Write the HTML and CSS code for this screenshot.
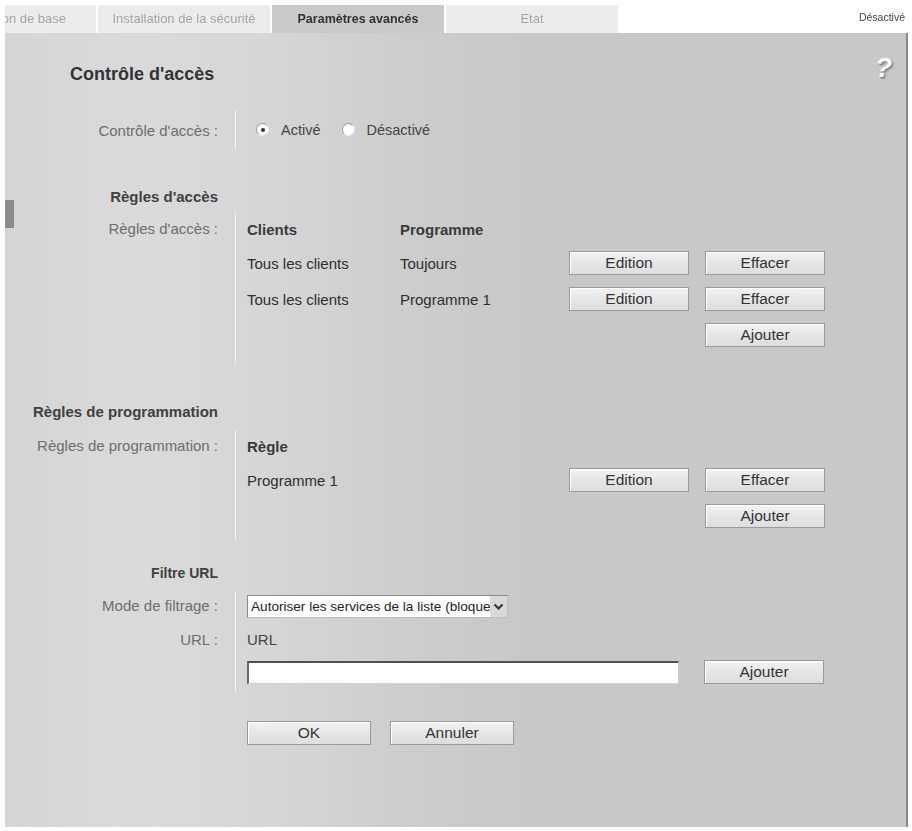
FILE: index.html
```html
<!DOCTYPE html>
<html lang="fr">
<head>
<meta charset="UTF-8">
<meta name="viewport" content="width=device-width, initial-scale=1.0">
<title>Paramètres avancés - Contrôle d'accès</title>
<link rel="stylesheet" href="styles.css">
</head>
<body>
<div class="page">
    <div class="topbar">
        <div class="tabs-clip">
            <div class="tabs">
                <div class="tab">Installation de base</div>
                <div class="tab">Installation de la sécurité</div>
                <div class="tab tab-active">Paramètres avancés</div>
                <div class="tab">Etat</div>
            </div>
        </div>
        <div class="status">Désactivé</div>
    </div>

    <div class="panel">
        <div class="marker"></div>

        <div class="title-row">
            <h1>Contrôle d'accès</h1>
            <span class="help">?</span>
        </div>

        <!-- Contrôle d'accès -->
        <div class="field field-single">
            <div class="label">Contrôle d'accès :</div>
            <div class="value radios">
                <span class="radio checked"></span><span class="radio-text">Activé</span>
                <span class="radio"></span><span class="radio-text">Désactivé</span>
            </div>
        </div>

        <!-- Règles d'accès -->
        <div class="section-title">Règles d'accès</div>
        <div class="field field-rules">
            <div class="label">Règles d'accès :</div>
            <div class="value">
                <div class="rules">
                    <div class="rule-head">Clients</div>
                    <div class="rule-head">Programme</div>
                    <div></div>
                    <div></div>

                    <div class="cell">Tous les clients</div>
                    <div class="cell">Toujours</div>
                    <div class="cell"><button class="button">Edition</button></div>
                    <div class="cell"><button class="button">Effacer</button></div>

                    <div class="cell">Tous les clients</div>
                    <div class="cell">Programme 1</div>
                    <div class="cell"><button class="button">Edition</button></div>
                    <div class="cell"><button class="button">Effacer</button></div>

                    <div class="cell"></div>
                    <div class="cell"></div>
                    <div class="cell"></div>
                    <div class="cell"><button class="button">Ajouter</button></div>
                </div>
            </div>
        </div>

        <!-- Règles de programmation -->
        <div class="section-title section-wide">Règles de programmation</div>
        <div class="field field-schedule">
            <div class="label">Règles de programmation :</div>
            <div class="value">
                <div class="rules">
                    <div class="rule-head wide">Règle</div>
                    <div></div>
                    <div></div>

                    <div class="cell wide">Programme 1</div>
                    <div class="cell"><button class="button">Edition</button></div>
                    <div class="cell"><button class="button">Effacer</button></div>

                    <div class="cell wide"></div>
                    <div class="cell"></div>
                    <div class="cell"><button class="button">Ajouter</button></div>
                </div>
            </div>
        </div>

        <!-- Filtre URL -->
        <div class="section-title section-url">Filtre URL</div>
        <div class="field field-mode">
            <div class="label">Mode de filtrage :</div>
            <div class="value">
                <div class="select">
                    <span class="select-text">Autoriser les services de la liste (bloquer tous les autres)</span>
                    <span class="select-arrow">
                        <svg width="11" height="8" viewBox="0 0 11 8"><path d="M1.5 1.5 L5.5 5.5 L9.5 1.5" fill="none" stroke="#333" stroke-width="2.2"/></svg>
                    </span>
                </div>
            </div>
        </div>
        <div class="field field-url">
            <div class="label">URL :</div>
            <div class="value">
                <div class="url-head">URL</div>
                <div class="url-row">
                    <input type="text" class="url-input">
                    <button class="button">Ajouter</button>
                </div>
            </div>
        </div>

        <div class="actions">
            <button class="button button-wide">OK</button>
            <button class="button button-wide">Annuler</button>
        </div>
    </div>
</div>
</body>
</html>
```

FILE: styles.css
```css
body {
    font-family: "Liberation Sans", Arial, sans-serif;
    background-color: #ffffff;
    margin: 0;
    padding: 0;
    color: #333333;
}

.page {
    width: 912px;
    height: 831px;
    display: flex;
    flex-direction: column;
    filter: blur(0.35px);
}

.topbar {
    display: flex;
    align-items: flex-end;
    padding: 5px 7px 0 5px;
    height: 28px;
}

.tabs-clip {
    flex-grow: 1;
    overflow: hidden;
    height: 28px;
}

.tabs {
    display: flex;
    gap: 2px;
    margin-left: -81px;
}

.tab {
    flex: none;
    width: 172px;
    height: 28px;
    line-height: 28px;
    text-align: center;
    font-size: 13px;
    color: #a4a4a4;
    background-color: #ececec;
    white-space: nowrap;
}

.tab-active {
    background-color: #c9c9c9;
    color: #333333;
    font-weight: bold;
    font-size: 12.5px;
}

.status {
    align-self: center;
    font-size: 10.5px;
    color: #444444;
    margin-top: -4px;
}

.panel {
    position: relative;
    flex-grow: 1;
    margin: 0 4px 4px 5px;
    border-right: 2px solid #8a8a8a;
    background: linear-gradient(to right, #d5d5d5 0, #dadada 130px, #d6d6d6 260px, #cdcdcd 400px, #c8c8c8 520px, #c8c8c8 100%);
}

.marker {
    position: absolute;
    left: 0;
    top: 167px;
    width: 9px;
    height: 28px;
    background-color: #8c8c8c;
}

.title-row {
    display: flex;
    justify-content: space-between;
    align-items: flex-start;
    padding: 25px 14px 0 65px;
}

.title-row h1 {
    margin: 0;
    font-size: 18px;
    line-height: 32px;
    color: #333333;
}

.help {
    font-size: 28px;
    line-height: 28px;
    margin-top: -4px;
    color: #ffffff;
    font-style: italic;
    font-weight: bold;
    text-shadow: 1px 1px 1px #7a7a7a, 2px 2px 2px #a0a0a0;
}

.field {
    display: flex;
    font-size: 15px;
}

.label {
    flex: none;
    width: 213px;
    text-align: right;
    color: #6e6e6e;
    line-height: 32px;
    white-space: nowrap;
}

.value {
    flex-grow: 1;
    margin-left: 17px;
    padding-left: 11px;
    border-left: 1px solid #f6f6f6;
}

.field-single {
    margin-top: 20px;
    height: 39px;
}

.field-single .label {
    line-height: 41px;
}

.radios {
    display: flex;
    align-items: center;
    color: #444444;
    font-size: 14.5px;
}

.radio {
    width: 11px;
    height: 11px;
    border-radius: 50%;
    background-color: #ffffff;
    border: 1px solid #9a9a9a;
    border-right-color: #e8e8e8;
    border-bottom-color: #e8e8e8;
    margin-left: 9px;
    display: flex;
    align-items: center;
    justify-content: center;
}

.radio + .radio-text {
    margin-left: 12px;
}

.radio-text + .radio {
    margin-left: 21px;
}

.radio.checked::after {
    content: "";
    width: 4px;
    height: 4px;
    border-radius: 50%;
    background-color: #333333;
}

.section-title {
    width: 213px;
    text-align: right;
    font-size: 15px;
    font-weight: bold;
    color: #404040;
    line-height: 32px;
    margin-top: 32px;
    white-space: nowrap;
}

.section-wide {
    margin-top: 33px;
    margin-bottom: 2px;
}

.section-url {
    margin-top: 17px;
    margin-bottom: 3px;
    font-size: 14px;
}

.rules {
    display: grid;
    grid-template-columns: 137px 153px 120px 120px;
    grid-auto-rows: 36px;
    grid-template-rows: 32px;
    column-gap: 16px;
    align-items: center;
    color: #2e2e2e;
}

.rules .wide {
    grid-column: span 2;
}

.rule-head {
    font-weight: bold;
    color: #3a3a3a;
}

.cell {
    white-space: nowrap;
}

.field-rules .value {
    padding-bottom: 10px;
}

.field-schedule .value {
    padding-bottom: 6px;
}

.button {
    font-family: "Liberation Sans", Arial, sans-serif;
    font-size: 15.5px;
    color: #333333;
    width: 120px;
    height: 24px;
    padding: 0;
    border: 1px solid #9a9a9a;
    border-radius: 0;
    background: linear-gradient(#f2f2f2, #e4e4e4 60%, #dedede);
    box-shadow: inset 1px 1px 0 #ffffff;
    cursor: pointer;
}

.field-mode .value {
    height: 25px;
    padding-top: 3px;
}

.field-mode .label {
    line-height: 28px;
}

.select {
    display: flex;
    width: 259px;
    height: 21px;
    background-color: #ffffff;
    border: 1px solid #8c8c8c;
    border-right-color: #bdbdbd;
    border-bottom-color: #bdbdbd;
    font-size: 13.6px;
    color: #222222;
}

.select-text {
    flex-grow: 1;
    overflow: hidden;
    white-space: nowrap;
    line-height: 21px;
    padding-left: 3px;
}

.select-arrow {
    flex: none;
    width: 17px;
    background-color: #d9d9d9;
    display: flex;
    align-items: center;
    justify-content: center;
}

.field-url .label {
    line-height: 40px;
}

.url-head {
    line-height: 40px;
    color: #444444;
}

.url-row {
    display: flex;
    align-items: center;
    gap: 25px;
    padding-bottom: 8px;
}

.url-input {
    width: 432px;
    height: 23px;
    box-sizing: border-box;
    margin: 0;
    border: 1px solid #d0d0d0;
    border-top: 2px solid #505050;
    border-left: 2px solid #6a6a6a;
    background-color: #ffffff;
    outline: none;
}

.actions {
    display: flex;
    gap: 19px;
    padding-left: 242px;
    margin-top: 29px;
}

.button-wide {
    width: 124px;
}
```
